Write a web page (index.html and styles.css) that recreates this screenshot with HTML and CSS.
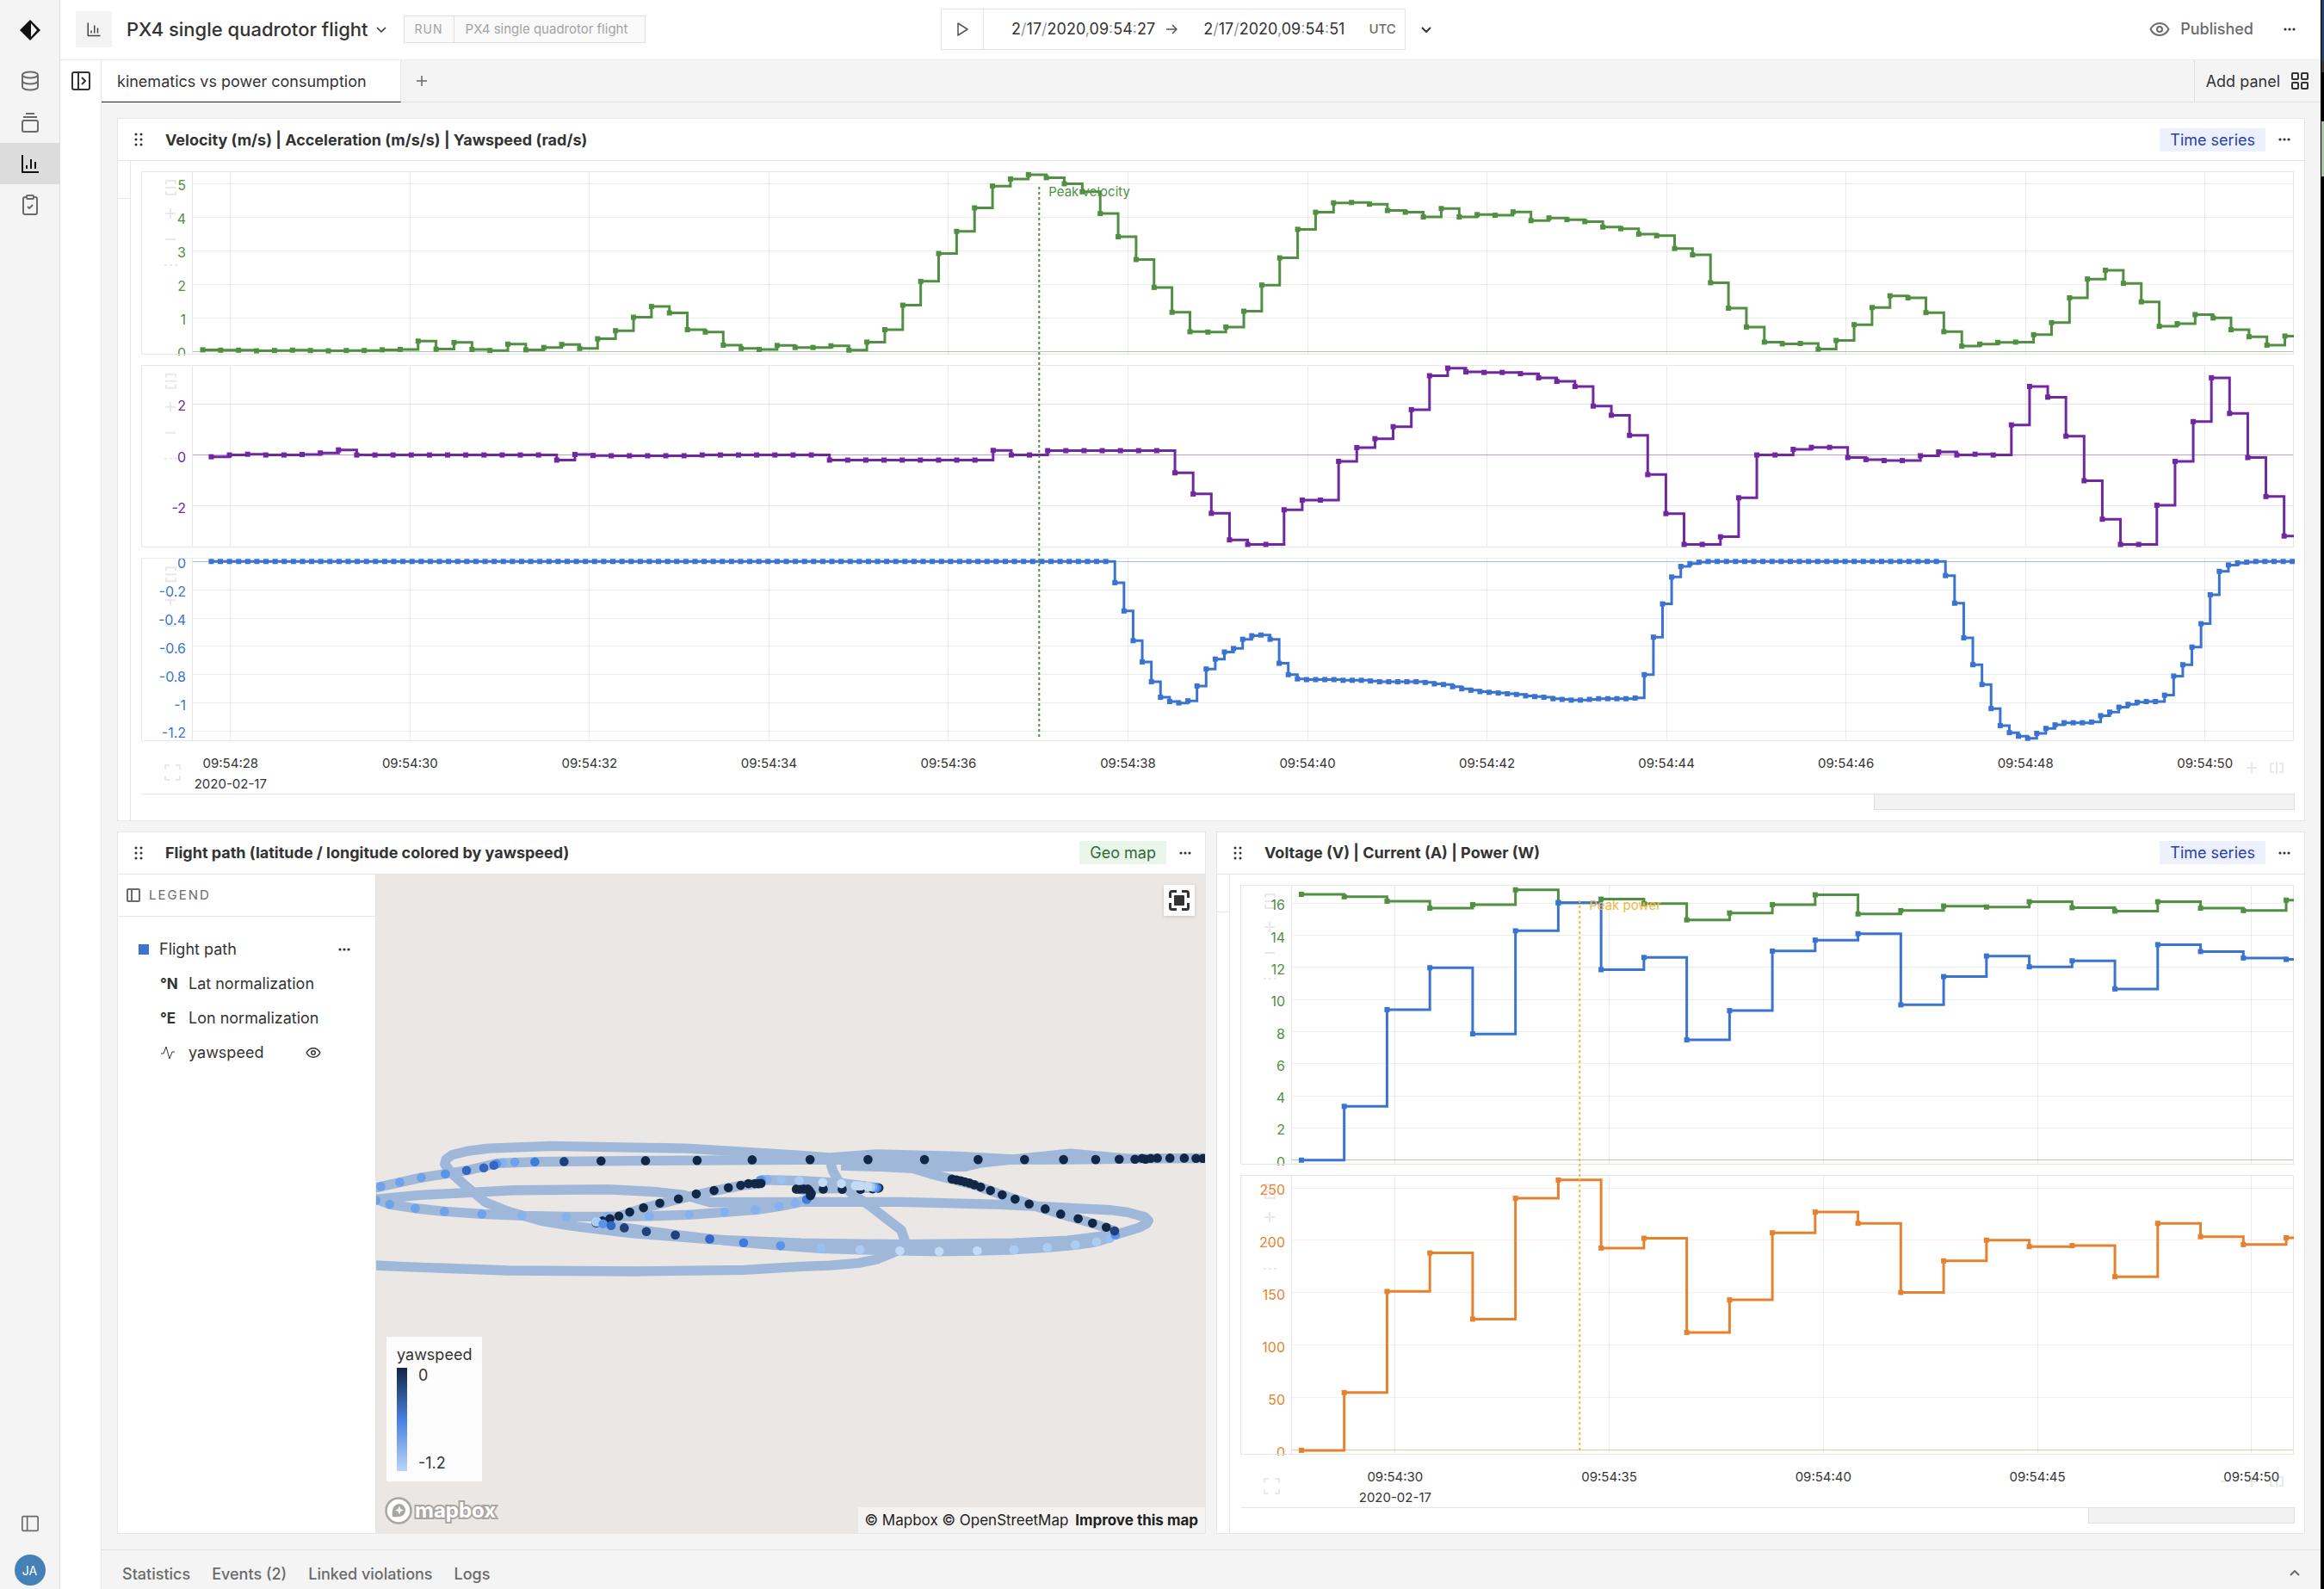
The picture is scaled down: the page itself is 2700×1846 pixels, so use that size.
FILE: index.html
```html
<!DOCTYPE html>
<html lang="en">
<head>
    <meta charset="UTF-8">
    <meta name="viewport" content="width=device-width, initial-scale=1.0">
    <link rel="stylesheet" href="styles.css">
    <title>PX4 single quadrotor flight</title>
</head>
<body>
    <nav class="sidebar">
        <a href="#" class="nav-item logo" aria-label="Home">
            <svg width="24" height="24" viewBox="0 0 24 24"><path d="M12 0 L24 12 L12 24 L0 12 Z" fill="#111"/><path d="M13 4 L20 12 L13 20 Z" fill="#f4f4f4"/></svg>
        </a>
        <a href="#" class="nav-item" aria-label="Data">
            <svg class="icon" width="24" height="24" viewBox="0 0 24 24"><ellipse cx="12" cy="5" rx="9" ry="3.5"/><path d="M3 5v14c0 2 4 3.500 9 3.500s9-1.500 9-3.500V5M3 12c0 2 4 3.500 9 3.500s9-1.500 9-3.500"/></svg>
        </a>
        <a href="#" class="nav-item" aria-label="Runs">
            <svg class="icon" width="24" height="24" viewBox="0 0 24 24"><rect x="3" y="10" width="18" height="13" rx="2"/><path d="M4 6h16M7 2h10"/></svg>
        </a>
        <a href="#" class="nav-item active" aria-label="Workbooks">
            <svg class="icon" width="24" height="24" viewBox="0 0 24 24"><path d="M3 2v20h19M8 18v-4M13 18V7M18 18v-8"/></svg>
        </a>
        <a href="#" class="nav-item" aria-label="Checklists">
            <svg class="icon" width="24" height="24" viewBox="0 0 24 24"><rect x="4" y="3" width="16" height="20" rx="2"/><rect x="8" y="1" width="8" height="4" rx="1" fill="#f4f4f4"/><path d="M9 14l2 2 4-4"/></svg>
        </a>
        <div class="nav-bottom">
            <button class="icon-btn" aria-label="Toggle sidebar">
                <svg class="icon" width="20" height="20" viewBox="0 0 24 24"><rect x="1" y="2" width="22" height="20" rx="2"/><path d="M8 2v20"/></svg>
            </button>
            <button class="avatar">JA</button>
        </div>
    </nav>

    <div class="app">
        <header class="header">
            <div class="header-left">
                <span class="title-icon">
                    <svg class="icon" width="18" height="18" viewBox="0 0 24 24"><path d="M3 2v20h19M8 18v-4M13 18V6M18 18v-8"/></svg>
                </span>
                <button class="title">PX4 single quadrotor flight
                    <svg class="icon" width="12" height="12" viewBox="0 0 12 12"><path d="M1 4l5 5 5-5"/></svg>
                </button>
                <a href="#" class="run"><span class="run-tag">RUN</span><span class="run-name">PX4 single quadrotor flight</span></a>
            </div>
            <div class="time">
                <div class="range">
                    <button class="play" aria-label="Play">
                        <svg class="icon" width="16" height="18" viewBox="0 0 16 18"><path d="M3 2l11 7-11 7z"/></svg>
                    </button>
                    <button class="date">2<i>/</i>17<i>/</i>2020<i>,</i>09<i>:</i>54<i>:</i>27</button>
                    <svg class="icon arrow" width="16" height="16" viewBox="0 0 16 16"><path d="M2 8h12M9 3l5 5-5 5"/></svg>
                    <button class="date date-end">2<i>/</i>17<i>/</i>2020<i>,</i>09<i>:</i>54<i>:</i>51</button>
                    <span class="zone">UTC</span>
                </div>
                <button class="icon-btn" aria-label="Time options">
                    <svg class="icon" width="12" height="12" viewBox="0 0 12 12"><path d="M1 4l5 5 5-5"/></svg>
                </button>
            </div>
            <div class="header-right">
                <button class="status">
                    <svg class="icon" width="24" height="24" viewBox="0 0 24 24"><path d="M1.500 12C4 7 7.500 5 12 5s8 2 10.500 7c-2.500 5-6 7-10.500 7s-8-2-10.500-7z"/><circle cx="12" cy="12" r="3"/></svg>
                    Published
                </button>
                <button class="icon-btn" aria-label="More">
                    <svg class="dots" width="16" height="16" viewBox="0 0 16 16"><circle cx="3" cy="8" r="1.600"/><circle cx="8" cy="8" r="1.600"/><circle cx="13" cy="8" r="1.600"/></svg>
                </button>
            </div>
        </header>

        <div class="workspace">
            <aside class="rail">
                <button class="icon-btn" aria-label="Open panel list">
                    <svg class="icon" width="22" height="22" viewBox="0 0 22 22"><rect x="1" y="1" width="20" height="20" rx="2"/><path d="M8 1v20M12 7l4 4-4 4"/></svg>
                </button>
            </aside>
            <div class="content">
                <div class="tabs">
                    <a href="#" class="tab">kinematics vs power consumption</a>
                    <button class="add-tab" aria-label="Add tab">
                        <svg class="icon" width="14" height="14" viewBox="0 0 14 14"><path d="M7 1v12M1 7h12"/></svg>
                    </button>
                    <button class="add-panel">Add panel
                        <svg class="icon" width="20" height="20" viewBox="0 0 20 20"><rect x="1" y="1" width="7" height="7" rx="1"/><rect x="12" y="1" width="7" height="7" rx="1"/><rect x="1" y="12" width="7" height="7" rx="1"/><rect x="12" y="12" width="7" height="7" rx="1"/></svg>
                    </button>
                </div>

                <main class="panels">
                    <section class="panel wide">
                        <div class="panel-head">
                            <svg class="dots grip" width="10" height="16" viewBox="0 0 10 16"><circle cx="2" cy="2" r="1.500"/><circle cx="8" cy="2" r="1.500"/><circle cx="2" cy="8" r="1.500"/><circle cx="8" cy="8" r="1.500"/><circle cx="2" cy="14" r="1.500"/><circle cx="8" cy="14" r="1.500"/></svg>
                            <h2>Velocity (m/s) | Acceleration (m/s/s) | Yawspeed (rad/s)</h2>
                            <span class="badge">Time series</span>
                            <button class="icon-btn" aria-label="Panel menu">
                                <svg class="dots" width="16" height="16" viewBox="0 0 16 16"><circle cx="3" cy="8" r="1.600"/><circle cx="8" cy="8" r="1.600"/><circle cx="13" cy="8" r="1.600"/></svg>
                            </button>
                        </div>
                        <div class="panel-body">
                            <div class="gutter"></div>
                            <div class="chart" id="kinematics"></div>
                        </div>
                    </section>

                    <section class="panel">
                        <div class="panel-head">
                            <svg class="dots grip" width="10" height="16" viewBox="0 0 10 16"><circle cx="2" cy="2" r="1.500"/><circle cx="8" cy="2" r="1.500"/><circle cx="2" cy="8" r="1.500"/><circle cx="8" cy="8" r="1.500"/><circle cx="2" cy="14" r="1.500"/><circle cx="8" cy="14" r="1.500"/></svg>
                            <h2>Flight path (latitude / longitude colored by yawspeed)</h2>
                            <span class="badge geo">Geo map</span>
                            <button class="icon-btn" aria-label="Panel menu">
                                <svg class="dots" width="16" height="16" viewBox="0 0 16 16"><circle cx="3" cy="8" r="1.600"/><circle cx="8" cy="8" r="1.600"/><circle cx="13" cy="8" r="1.600"/></svg>
                            </button>
                        </div>
                        <div class="panel-body">
                            <div class="legend">
                                <div class="legend-head">
                                    <svg class="icon" width="16" height="16" viewBox="0 0 16 16"><rect x="1" y="1" width="14" height="14" rx="1"/><path d="M6 1v14"/></svg>
                                    LEGEND
                                </div>
                                <ul>
                                    <li><span class="swatch"></span>Flight path
                                        <button class="icon-btn push" aria-label="Layer menu">
                                            <svg class="dots" width="16" height="16" viewBox="0 0 16 16"><circle cx="3" cy="8" r="1.600"/><circle cx="8" cy="8" r="1.600"/><circle cx="13" cy="8" r="1.600"/></svg>
                                        </button>
                                    </li>
                                    <li class="sub"><b>°N</b>Lat normalization</li>
                                    <li class="sub"><b>°E</b>Lon normalization</li>
                                    <li class="sub"><b><svg class="icon" width="18" height="18" viewBox="0 0 18 18"><path d="M1 10h3l3-8 4 14 3-8h3"/></svg></b>yawspeed
                                        <button class="icon-btn eye" aria-label="Hide yawspeed">
                                            <svg class="icon" width="18" height="18" viewBox="0 0 24 24"><path d="M1.500 12C4 7 7.500 5 12 5s8 2 10.500 7c-2.500 5-6 7-10.500 7s-8-2-10.500-7z"/><circle cx="12" cy="12" r="3"/></svg>
                                        </button>
                                    </li>
                                </ul>
                            </div>
                            <div class="map">
                                <svg class="map-canvas" id="flight-path" viewBox="18 -795 2892 2298" preserveAspectRatio="xMidYMid slice"></svg>
                                <button class="fullscreen" aria-label="Fit to data">
                                    <svg width="24" height="24" viewBox="0 0 24 24"><path d="M1.500 9V3.500a2 2 0 0 1 2-2H9M15 1.500h5.500a2 2 0 0 1 2 2V9M22.500 15v5.500a2 2 0 0 1-2 2H15M9 22.500H3.500a2 2 0 0 1-2-2V15" fill="none" stroke="#333" stroke-width="3"/><rect x="6" y="6" width="12" height="12" rx="1" fill="#333"/></svg>
                                </button>
                                <div class="scale">
                                    <span>yawspeed</span>
                                    <div class="scale-row">
                                        <div class="scale-bar"></div>
                                        <div class="scale-values"><span>0</span><span>-1.2</span></div>
                                    </div>
                                </div>
                                <a href="#" class="mapbox">
                                    <svg width="32" height="32" viewBox="0 0 32 32"><circle cx="16" cy="16" r="14.500" fill="#fff" stroke="#a9a5a2" stroke-width="2.500"/><path d="M9 23c-1-6 0-14 7.500-15a7.500 7.500 0 0 1 7.500 7.500C24 23 15 24 9 23z" fill="#a9a5a2"/><path d="M17 10.500l1.500 3.500 3.500 1.500-3.500 1.500-1.500 3.500-1.500-3.500-3.500-1.500 3.500-1.500z" fill="#fff"/></svg>
                                    <span>mapbox</span>
                                </a>
                                <div class="attribution">
                                    <a href="#">© Mapbox</a> <a href="#">© OpenStreetMap</a> <a href="#"><strong>Improve this map</strong></a>
                                </div>
                            </div>
                        </div>
                    </section>

                    <section class="panel">
                        <div class="panel-head">
                            <svg class="dots grip" width="10" height="16" viewBox="0 0 10 16"><circle cx="2" cy="2" r="1.500"/><circle cx="8" cy="2" r="1.500"/><circle cx="2" cy="8" r="1.500"/><circle cx="8" cy="8" r="1.500"/><circle cx="2" cy="14" r="1.500"/><circle cx="8" cy="14" r="1.500"/></svg>
                            <h2>Voltage (V) | Current (A) | Power (W)</h2>
                            <span class="badge">Time series</span>
                            <button class="icon-btn" aria-label="Panel menu">
                                <svg class="dots" width="16" height="16" viewBox="0 0 16 16"><circle cx="3" cy="8" r="1.600"/><circle cx="8" cy="8" r="1.600"/><circle cx="13" cy="8" r="1.600"/></svg>
                            </button>
                        </div>
                        <div class="panel-body">
                            <div class="gutter"></div>
                            <div class="chart" id="power"></div>
                        </div>
                    </section>
                </main>

                <footer class="drawer">
                    <a href="#">Statistics</a>
                    <a href="#">Events (2)</a>
                    <a href="#">Linked violations</a>
                    <a href="#">Logs</a>
                    <button class="icon-btn push" aria-label="Expand">
                        <svg class="icon" width="12" height="12" viewBox="0 0 12 12"><path d="M1 8l5-5 5 5"/></svg>
                    </button>
                </footer>
            </div>
        </div>
    </div>
    <div class="edge"></div>

    <script src="charts.js"></script>
</body>
</html>
```

FILE: styles.css
```css
* {
    box-sizing: border-box;
}

body {
    margin: 0;
    display: grid;
    grid-template-columns: 70px minmax(0, 1fr) 4px;
    height: 100vh;
    font-family: Inter, sans-serif;
    font-size: 18px;
    color: #333;
    background-color: #f4f4f4;
    overflow: hidden;
}

button {
    font: inherit;
    color: inherit;
    background: none;
    border: 0;
    padding: 0;
    cursor: pointer;
}

a {
    color: inherit;
    text-decoration: none;
}

.icon {
    fill: none;
    stroke: currentColor;
    stroke-width: 2;
    stroke-linejoin: round;
    flex: none;
}

.dots {
    fill: #333;
    flex: none;
}

.icon-btn {
    display: flex;
    align-items: center;
}

.push {
    margin-left: auto;
}

/* sidebar */
.sidebar {
    display: flex;
    flex-direction: column;
    border-right: 1px solid #e0e0e0;
    color: #6b6b6b;
}

.nav-item {
    height: 48px;
    display: flex;
    align-items: center;
    justify-content: center;
}

.logo {
    height: 70px;
}

.active {
    background-color: #dcdcdc;
    color: #111;
}

.nav-bottom {
    margin-top: auto;
    padding-bottom: 4px;
    display: flex;
    flex-direction: column;
    align-items: center;
    gap: 26px;
}

.avatar {
    width: 36px;
    height: 36px;
    border-radius: 50%;
    background-color: #4580b8;
    color: #fff;
    font-size: 14px;
}

.app {
    display: flex;
    flex-direction: column;
    min-width: 0;
    min-height: 0;
}

/* header */
.header {
    height: 70px;
    flex: none;
    display: grid;
    grid-template-columns: 1fr auto 1fr;
    align-items: center;
    padding: 0 28px 2px 18px;
    background-color: #fff;
    border-bottom: 1px solid #ebebeb;
}

.header-left {
    display: flex;
    align-items: center;
}

.title-icon {
    width: 42px;
    height: 42px;
    display: flex;
    align-items: center;
    justify-content: center;
    background-color: #f3f3f3;
    color: #444;
    margin-right: 17px;
}

.title {
    display: flex;
    align-items: center;
    gap: 9px;
    font-size: 22px;
    font-weight: 500;
    margin-right: 20px;
}

.run {
    display: flex;
    height: 32px;
    line-height: 30px;
    border: 1px solid #e0e0e0;
    background-color: #fafafa;
    color: #a3a3a3;
    font-size: 15px;
}

.run-tag {
    padding: 0 12px;
    border-right: 1px solid #e0e0e0;
    font-size: 14px;
    letter-spacing: 1px;
}

.run-name {
    padding: 0 20px 0 13px;
}

.time {
    display: flex;
    align-items: center;
    gap: 18px;
}

.time > .icon-btn,
.title .icon,
.play .icon,
.arrow,
.add-tab .icon {
    stroke-width: 1.5;
}

.range {
    display: flex;
    align-items: center;
    height: 48px;
    border: 1px solid #e5e5e5;
}

.play {
    display: flex;
    align-items: center;
    justify-content: center;
    width: 49px;
    height: 46px;
    border-right: 1px solid #e5e5e5;
    color: #555;
    margin-right: 32px;
}

.date i {
    font-style: normal;
    color: #999;
}

.arrow {
    margin: 0 29px 0 11px;
    color: #555;
}

.zone {
    margin: 0 10px 0 28px;
    font-size: 15px;
    font-weight: 500;
    color: #6b6b6b;
}

.header-right {
    display: flex;
    align-items: center;
    justify-content: flex-end;
    gap: 34px;
}

.status {
    display: flex;
    align-items: center;
    gap: 12px;
    font-weight: 500;
    color: #6b6b6b;
}

/* workspace */
.workspace {
    flex: 1;
    display: flex;
    min-height: 0;
}

.rail {
    width: 48px;
    background-color: #fff;
    border-right: 1px solid #e5e5e5;
    padding: 13px 13px;
}

.content {
    flex: 1;
    display: flex;
    flex-direction: column;
    min-width: 0;
}

.tabs {
    height: 49px;
    flex: none;
    display: flex;
    border-bottom: 1px solid #e0e0e0;
}

.tab {
    height: 49px;
    line-height: 49px;
    padding: 0 39px 0 18px;
    background-color: #fff;
    border-right: 1px solid #e5e5e5;
    border-bottom: 1px solid #1a2533;
}

.add-tab {
    width: 49px;
    display: flex;
    align-items: center;
    justify-content: center;
    color: #666;
}

.add-panel {
    margin-left: auto;
    display: flex;
    align-items: center;
    gap: 13px;
    padding: 0 14px 0 13px;
    border-left: 1px solid #e0e0e0;
}

.panels {
    flex: 1;
    min-height: 0;
    display: grid;
    grid-template-columns: repeat(2, minmax(0, 1fr));
    grid-template-rows: repeat(2, minmax(0, 1fr));
    gap: 12px;
    padding: 18px;
}

.panel {
    display: flex;
    flex-direction: column;
    background-color: #fff;
    border: 1px solid #e6e6e6;
}

.wide {
    grid-column: span 2;
}

.panel-head {
    height: 49px;
    flex: none;
    display: flex;
    align-items: center;
    padding: 0 15px 0 19px;
    border-bottom: 1px solid #e6e6e6;
}

.panel-head h2 {
    margin: 0 auto 0 26px;
    font-size: 18px;
    font-weight: 700;
}

.badge {
    height: 27px;
    line-height: 27px;
    padding: 0 12px;
    margin-right: 14px;
    background-color: #edf1fd;
    color: #2940ad;
}

.geo {
    background-color: #eaf6ec;
    color: #2f6b36;
}

.panel-body {
    flex: 1;
    min-height: 0;
    display: flex;
}

.gutter {
    width: 15px;
    border-right: 1px solid #e6e6e6;
    background: linear-gradient(#e6e6e6, #e6e6e6) 0 43px / 100% 1px no-repeat;
}

/* charts */
.chart {
    flex: 1;
    min-width: 0;
    min-height: 0;
}

.chart svg {
    display: block;
}

.frame,
.grid-line {
    shape-rendering: crispEdges;
    fill: none;
    stroke: #e6e6e6;
}

.grid-line {
    stroke: #ebebee;
}

.value-line {
    shape-rendering: crispEdges;
    opacity: 0.12;
}

.zero-line {
    opacity: 0.45;
}

.scroll-handle {
    fill: #f2f2f2;
    stroke: #e0e0e0;
    shape-rendering: crispEdges;
}

.tool {
    fill: none;
    stroke: #e9e9e9;
    stroke-width: 2;
}

.label {
    font-size: 15px;
    fill: #333;
}

.value {
    font-size: 16px;
}

.series {
    fill: none;
    stroke-width: 3;
}

.event {
    stroke-width: 2;
    stroke-dasharray: 3 3;
}

/* map */
.legend {
    width: 300px;
    flex: none;
    border-right: 1px solid #e6e6e6;
}

.legend-head {
    height: 49px;
    display: flex;
    align-items: center;
    gap: 10px;
    padding-left: 10px;
    border-bottom: 1px solid #e6e6e6;
    font-size: 15px;
    letter-spacing: 2px;
    color: #6b6b6b;
}

.legend ul {
    list-style: none;
    margin: 0;
    padding: 18px 28px 0 24px;
}

.legend li {
    height: 40px;
    display: flex;
    align-items: center;
}

.swatch {
    width: 12px;
    height: 12px;
    margin-right: 12px;
    background-color: #3a74d0;
}

.legend .sub {
    padding-left: 25px;
}

.sub b {
    width: 33px;
    font-size: 17px;
    font-weight: 700;
}

.sub b .icon {
    display: block;
    stroke-width: 1;
}

.eye {
    margin-left: auto;
    margin-right: 35px;
}

.map {
    flex: 1;
    min-width: 0;
    position: relative;
    background-color: #ebe7e4;
    overflow: hidden;
}

.map-canvas {
    display: block;
    width: 100%;
    height: 100%;
}

.track {
    fill: none;
    stroke: #9fb8da;
    stroke-width: 34;
    stroke-linejoin: round;
}

.fullscreen {
    position: absolute;
    top: 12px;
    right: 12px;
    width: 36px;
    height: 36px;
    display: flex;
    align-items: center;
    justify-content: center;
    background-color: #fcfcfc;
    box-shadow: 0 1px 4px rgba(0, 0, 0, 0.15);
}

.scale {
    position: absolute;
    left: 12px;
    bottom: 60px;
    padding: 10px 12px 12px;
    background-color: #fcfcfc;
}

.scale-row {
    display: flex;
    gap: 13px;
    margin-top: 5px;
}

.scale-bar {
    width: 12px;
    height: 120px;
    background: linear-gradient(#122646, #4680e0 50%, #bcd5f6);
}

.scale-values {
    display: flex;
    flex-direction: column;
    justify-content: space-between;
    line-height: 18px;
}

.mapbox {
    position: absolute;
    left: 10px;
    bottom: 10px;
    display: flex;
    align-items: center;
    gap: 3px;
}

.mapbox span {
    font-size: 24px;
    font-weight: 700;
    line-height: 28px;
    color: #fff;
    -webkit-text-stroke: 4px #a9a5a2;
    paint-order: stroke fill;
}

.attribution {
    position: absolute;
    right: 0;
    bottom: 0;
    height: 30px;
    line-height: 30px;
    padding: 0 8px;
    background-color: rgba(255, 255, 255, 0.5);
    color: #222;
    font-size: 17px;
}

.attribution strong {
    font-weight: 700;
    margin-left: 3px;
}

/* bottom drawer */
.drawer {
    height: 46px;
    flex: none;
    display: flex;
    align-items: center;
    gap: 25px;
    padding: 9px 24px 0;
    border-top: 1px solid #e0e0e0;
    font-weight: 500;
    color: #6b6b6b;
}

/* strip along the right side of the window */
.edge {
    border-left: 1px solid #000;
    background: linear-gradient(#1c4270 0 70px, #333 70px 84px, #000 84px 141px, #a5c8a1 141px 205px, #000 205px);
}
```

FILE: charts.js
```js
const GREEN = "#518f42";
const PURPLE = "#6f28a0";
const BLUE = "#3a74d0";
const ORANGE = "#e5822f";
const YELLOW = "#f2b83c";

const TIME = [27.57, 50.99];

const velocity = [
    .05, .04, .04, .02, .03, .04, .03, .02, .03, .03, .05, .06, .31, .07, .27, .06, .03, .22, .05, .12,
    .21, .09, .38, .62, 1.02, 1.34, 1.15, .65, .58, .19, .09, .06, .18, .12, .12, .17, .04, .28, .65, 1.38,
    2.09, 2.92, 3.58, 4.28, 4.93, 5.14, 5.27, 5.18, 5, 4.76, 4.11, 3.42, 2.74, 1.91, 1.17, .59, .58, .73, 1.2, 1.98,
    2.79, 3.64, 4.15, 4.43, 4.44, 4.39, 4.2, 4.15, 4.01, 4.26, 4.01, 4.08, 4.06, 4.16, 3.9, 3.98, 3.93, 3.87, 3.71, 3.66,
    3.5, 3.45, 3.07, 2.88, 2.05, 1.29, .73, .28, .23, .24, .07, .33, .8, 1.31, 1.66, 1.6, 1.16, .59, .16, .22,
    .27, .28, .5, .86, 1.6, 2.16, 2.42, 2.03, 1.48, .75, .83, 1.1, 1, .65, .44, .19, .46
];

const acceleration = [
    -.07, 0, .03, 0, 0, .02, .08, .2, 0, 0, 0, 0, 0, 0, 0, 0, 0, 0, 0, -.2,
    .02, -.02, -.03, -.03, -.03, -.03, -.03, 0, 0, 0, 0, 0, 0, 0, -.2, -.2, -.2, -.2, -.2, -.2,
    -.2, -.2, -.2, .18, 0, 0, .17, .17, .17, .17, .17, .17, .17, -.7, -1.53, -2.29, -3.33, -3.51, -3.51, -2.15,
    -1.77, -1.77, -.25, .29, .64, 1.11, 1.78, 3.11, 3.41, 3.26, 3.24, 3.24, 3.19, 3.03, 2.89, 2.69, 1.92, 1.56, .77, -.77,
    -2.3, -3.51, -3.51, -3.21, -1.68, 0, 0, .22, .3, .3, -.1, -.18, -.22, -.22, -.03, .12, 0, .03, 0, 1.18,
    2.69, 2.27, .74, -1.01, -2.52, -3.51, -3.51, -1.97, -.25, 1.31, 3.03, 1.63, -.1, -1.63, -3.18
];

const yawspeed = [
    ...Array(99).fill(0),
    -.15, -.35, -.56, -.71, -.85, -.96, -.99, -1, -.985, -.88, -.76, -.69, -.64, -.615, -.55, -.525, -.52, -.55, -.72, -.8,
    -.83, -.835, -.835, -.835, -.835, -.84, -.84, -.84, -.845, -.85, -.85, -.85, -.85, -.85, -.855, -.865, -.87, -.885, -.9, -.91,
    -.92, -.925, -.93, -.935, -.94, -.95, -.955, -.96, -.97, -.975, -.98, -.98, -.975, -.97, -.97, -.97, -.97, -.965, -.8, -.535,
    -.3, -.11, -.035, -.015, -.005, 0,
    ...Array(25).fill(0),
    -.1, -.295, -.54, -.73, -.87, -1.04, -1.16, -1.21, -1.235, -1.25, -1.215, -1.18, -1.155, -1.14, -1.14, -1.14, -1.135, -1.09, -1.065, -1.03,
    -1.01, -.995, -.99, -.99, -.945, -.81, -.73, -.605, -.44, -.235, -.07, -.025, -.01, -.005, 0, 0, 0, 0, 0
];

const voltage = [16.55, 16.4, 16.12, 15.69, 15.91, 16.83, 16.03, 16.25, 15.97, 14.96, 15.39, 15.91, 16.52, 15.33, 15.54, 15.82, 15.76, 16.09, 15.72, 15.51, 16.09, 15.69, 15.54, 16.19];
const current = [0, 3.35, 9.37, 11.98, 7.86, 14.28, 16.03, 11.86, 12.62, 7.49, 9.31, 13.02, 13.7, 14.1, 9.67, 11.43, 12.71, 12.04, 12.41, 10.66, 13.42, 12.99, 12.59, 12.5];
const power = [0, 55, 151.3, 188, 125, 240.1, 257.5, 192.7, 202, 112.3, 143.3, 207.2, 227, 216.2, 150.4, 180.5, 200.2, 194.1, 195, 165.4, 216.2, 203.5, 196, 202.5];

const charts = [
    {
        id: "kinematics",
        ticks: [28, 30, 32, 34, 36, 38, 40, 42, 44, 46, 48, 50],
        event: { time: 37.01, text: "Peak velocity", color: GREEN },
        tracks: [
            { range: [-.085, 5.37], labels: [5, 4, 3, 2, 1, 0], color: GREEN, series: [{ start: 27.69, step: .2, values: velocity, color: GREEN }] },
            { range: [-3.64, 3.544], labels: [2, 0, -2], color: PURPLE, series: [{ start: 27.785, step: .2026, values: acceleration, color: PURPLE }] },
            { range: [-1.27, .024], labels: [0, -.2, -.4, -.6, -.8, -1, -1.2], color: BLUE, series: [{ start: 27.785, step: .1017, values: yawspeed, color: BLUE }] }
        ]
    },
    {
        id: "power",
        ticks: [30, 35, 40, 45, 50],
        event: { time: 34.31, text: "Peak power", color: YELLOW },
        tracks: [
            {
                range: [-.28, 17.14], labels: [16, 14, 12, 10, 8, 6, 4, 2, 0], color: GREEN,
                series: [
                    { start: 27.81, step: 1, values: voltage, color: GREEN },
                    { start: 27.81, step: 1, values: current, color: BLUE }
                ]
            },
            { range: [-4.2, 262.3], labels: [250, 200, 150, 100, 50, 0], color: ORANGE, series: [{ start: 27.81, step: 1, values: power, color: ORANGE }] }
        ]
    }
];

const PAD = 12;
const GAP = 12;
const AXIS = 59;
const FOOT = 92;

// vertical zoom controls that sit behind the axis labels
function tools() {
    return `<path class="tool" d="M29 15v-4h11v4M28 19h13M29 23v4h11v-4M34 43v12M28 49h12M28 79h12"/>
        <path class="tool" d="M27 109h3M33 109h3M39 109h3"/>`;
}

function drawTrack(track, chart, x, y, w, h) {
    const [min, max] = track.range;
    const px = t => AXIS + (t - TIME[0]) / (TIME[1] - TIME[0]) * (w - AXIS);
    const py = v => (max - v) / (max - min) * h;
    let out = `<svg x="${x}" y="${y}" width="${w + 1}" height="${h + 1}">`;
    out += tools();

    chart.ticks.forEach(t => {
        out += `<line class="grid-line" x1="${px(t)}" x2="${px(t)}" y1="0" y2="${h}"/>`;
    });
    track.labels.forEach(v => {
        const kind = v === 0 ? "value-line zero-line" : "value-line";
        out += `<line class="${kind}" stroke="${track.color}" x1="${AXIS}" x2="${w}" y1="${py(v)}" y2="${py(v)}"/>`;
        out += `<text class="label value" style="fill:${track.color}" text-anchor="end" x="${AXIS - 7}" y="${py(v) + 8}">${v}</text>`;
    });
    out += `<line class="frame" x1="${AXIS}" x2="${AXIS}" y1="0" y2="${h}"/>`;
    out += `<rect class="frame" x="0.500" y="0.500" width="${w - 1}" height="${h - 1}"/>`;

    track.series.forEach(s => {
        let d = "";
        let marks = "";
        s.values.forEach((v, i) => {
            const sx = px(s.start + i * s.step);
            const sy = py(v);
            d += i === 0 ? `M${sx} ${sy}` : `H${sx}V${sy}`;
            marks += `<rect x="${sx - 3}" y="${sy - 3}" width="6" height="6"/>`;
        });
        out += `<path class="series" stroke="${s.color}" d="${d}H${w}"/>`;
        out += `<g fill="${s.color}">${marks}</g>`;
    });
    return out + "</svg>";
}

function drawChart(chart) {
    const el = document.getElementById(chart.id);
    el.innerHTML = "";
    const W = el.clientWidth;
    const H = el.clientHeight;
    const w = W - PAD * 2;
    const n = chart.tracks.length;
    const h = (H - PAD - FOOT - GAP * (n - 1)) / n;
    const bottom = H - FOOT;
    const right = PAD + w;
    const px = t => PAD + AXIS + (t - TIME[0]) / (TIME[1] - TIME[0]) * (w - AXIS);
    let out = `<svg width="${W}" height="${H}">`;

    chart.tracks.forEach((track, i) => {
        out += drawTrack(track, chart, PAD, PAD + i * (h + GAP), w, h);
    });

    // fit and horizontal zoom controls
    out += `<g transform="translate(${PAD + 27} ${bottom + 27})"><path class="tool" d="M1 6V1h5M13 1h5v5M18 13v5h-5M6 18H1v-5"/></g>`;
    out += `<g transform="translate(${right - 85} ${bottom + 24})"><path class="tool" d="M0 7h12M30 7h12M36 1v12M62 2h-4v10h4M65 0v14M68 2h4v10h-4"/></g>`;

    chart.ticks.forEach((t, i) => {
        out += `<text class="label" text-anchor="middle" x="${px(t)}" y="${bottom + 31}">09:54:${t}</text>`;
        if (i === 0) {
            out += `<text class="label" text-anchor="middle" x="${px(t)}" y="${bottom + 55}">2020-02-17</text>`;
        }
    });

    const ex = px(chart.event.time);
    out += `<line class="event" stroke="${chart.event.color}" x1="${ex}" x2="${ex}" y1="${PAD + 18}" y2="${bottom - 4}"/>`;
    out += `<text class="label" style="fill:${chart.event.color}" x="${ex + 11}" y="${PAD + 29}">${chart.event.text}</text>`;

    out += `<line class="frame" x1="${PAD}" x2="${right}" y1="${bottom + 61}" y2="${bottom + 61}"/>`;
    out += `<rect class="scroll-handle" x="${right - w * .195}" y="${bottom + 61}" width="${w * .195}" height="18"/>`;
    el.innerHTML = out + "</svg>";
}

const routes = [
    "M2915 194L2640 196L2440 199L1500 200L962 203L575 207L441 212L336 237L176 262L35 293L0 302",
    "M2640 196L2440 178L2240 198L2050 188L1765 180L1600 192L1490 184L1100 160L630 152L410 160L335 170L285 182L262 198L258 215L280 245L330 290L400 348L480 380L595 413L700 430L900 455L1200 478L1500 490L1850 495L2240 490L2430 481L2600 460L2680 436L2706 422L2712 412L2700 400L2640 383L2580 375L2400 366L2200 356L1850 347L1500 347L1184 348L1090 322L1000 312L830 303L500 306L170 323L18 337",
    "M0 330L66 355L155 369L258 380L389 389L530 395L684 398L825 398L976 396L1116 391L1240 382L1347 374L1430 361L1487 350L1525 338L1535 310L1490 302L1580 300L1772 298",
    "M1772 298L1640 281L1500 273L1360 270M1365 282L1296 289L1202 307L1078 336L955 367L869 396L790 418L888 437L1067 462L1188 476L1307 489L1436 499L1570 509L1706 513L1845 516L1982 519L2115 517L2243 513L2359 506L2457 497L2531 486L2580 470L2594 448L2517 421L2406 389L2296 354L2202 322L2103 287L2027 268L1950 248L1890 230L1780 224L1640 220",
    "M2240 198L2130 210L2070 224L2000 224L1890 220L1740 205",
    "M1600 200L1612 240L1630 272L1680 320L1740 360L1850 445L1862 480L1862 490L1830 520L1765 547L1700 560L1600 568L1500 572L1300 584L920 589L480 586L100 572L0 567"
];

// x, y, colour index
const shades = ["#122646", "#1f4078", "#3268c4", "#3f7bdd", "#5a93e8", "#6ea2ea", "#85b1ef", "#97c0f4", "#acccf4", "#c3dbf7"];
const fixes = [
    [2902, 195, 0], [2878, 195, 0], [2837, 194, 0], [2787, 194, 0], [2743, 194, 0], [2720, 195, 0], [2702, 198, 0], [2690, 195, 0],
    [2665, 198, 0], [2610, 198, 0], [2528, 199, 0], [2416, 199, 0], [2280, 199, 0], [2118, 199, 0], [1931, 199, 0], [1734, 199, 0],
    [1532, 199, 0], [1330, 200, 0], [1138, 202, 0], [958, 203, 0], [803, 204, 0], [674, 206, 1], [572, 207, 3], [502, 208, 5],
    [460, 210, 6], [439, 214, 4], [429, 219, 2], [394, 228, 2], [334, 237, 2], [260, 249, 4], [176, 262, 5], [101, 278, 5],
    [35, 293, 5], [18, 341, 5], [66, 355, 5], [155, 369, 5], [257, 380, 5], [387, 389, 5], [527, 395, 6], [681, 398, 6],
    [822, 398, 6], [971, 396, 6], [1111, 391, 6], [1234, 382, 6], [1341, 374, 6], [1423, 361, 6], [1480, 350, 6], [1520, 338, 3],
    [1533, 325, 0], [1536, 318, 0], [1530, 308, 0], [1524, 302, 0], [1510, 302, 0], [1496, 302, 0], [1484, 302, 0],
    [1578, 302, 0], [1644, 303, 0], [1708, 303, 0], [1750, 301, 0], [1772, 298, 0], [1768, 298, 1], [1764, 297, 3], [1757, 296, 4],
    [1750, 295, 6], [1742, 294, 8], [1732, 293, 9], [1710, 291, 9], [1700, 291, 9], [1690, 290, 9], [1641, 283, 9], [1576, 279, 9],
    [1494, 272, 8], [1431, 270, 7], [1382, 269, 6], [1364, 270, 5], [1358, 271, 4], [1361, 282, 0], [1352, 283, 0], [1339, 283, 0],
    [1317, 283, 0], [1290, 289, 0], [1247, 297, 0], [1197, 307, 0], [1135, 319, 0], [1073, 336, 0], [1008, 351, 0], [951, 367, 0],
    [903, 382, 0], [865, 396, 0], [834, 405, 0], [808, 413, 0], [786, 420, 1], [786, 416, 9], [790, 416, 8], [810, 423, 4], [838, 429, 2],
    [884, 437, 1], [961, 450, 1], [1062, 462, 1], [1182, 476, 2], [1300, 489, 3], [1429, 499, 4], [1570, 507, 7], [1706, 513, 8],
    [1845, 517, 9], [1982, 519, 9], [2115, 517, 9], [2243, 513, 8], [2359, 506, 8], [2457, 497, 8], [2531, 486, 8], [2577, 474, 7],
    [2597, 462, 4], [2594, 448, 1], [2565, 435, 0], [2517, 421, 0], [2467, 405, 0], [2406, 389, 0], [2352, 371, 0], [2296, 354, 0],
    [2247, 337, 0], [2202, 322, 0], [2161, 307, 0], [2127, 295, 0], [2105, 287, 0], [2088, 281, 0], [2072, 277, 0], [2058, 273, 0],
    [2043, 270, 0], [2027, 267, 0]
];

function drawMap() {
    let out = "";
    routes.forEach(d => {
        out += `<path class="track" d="${d}"/>`;
    });
    fixes.forEach(([x, y, shade]) => {
        out += `<circle cx="${x}" cy="${y}" r="16" fill="${shades[shade]}"/>`;
    });
    document.getElementById("flight-path").innerHTML = out;
}

function draw() {
    charts.forEach(drawChart);
}

drawMap();
draw();
window.addEventListener("resize", draw);
```
